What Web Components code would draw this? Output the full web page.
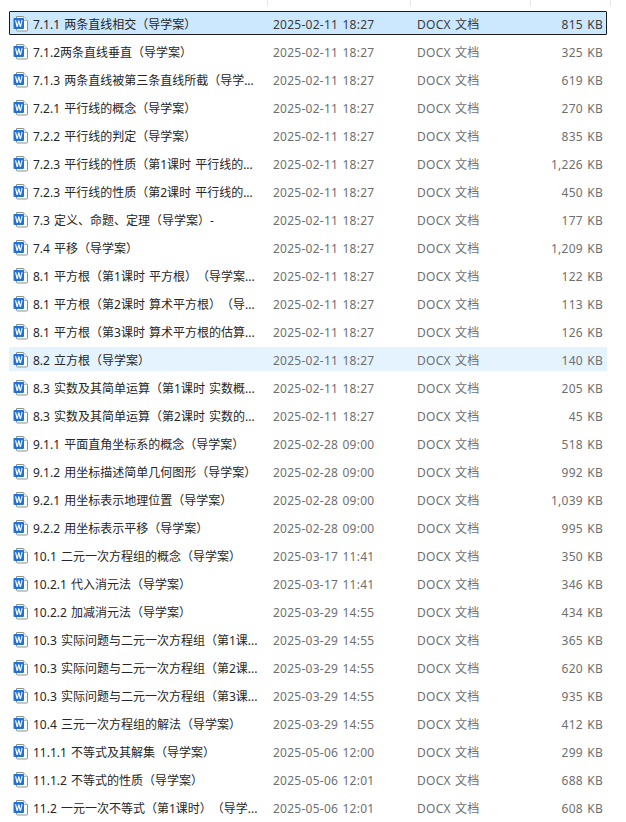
<!DOCTYPE html>
<html lang="zh">
<head>
<meta charset="utf-8">
<title>文件列表</title>
<style>
  html, body { margin: 0; background: #fff; }
  body { font: 12px "Noto Sans", "Noto Sans CJK SC", sans-serif; overflow: hidden; height: 822px; }
</style>
</head>
<body>
<file-list></file-list>
<script>
const FILES = [
  ["7.1.1 两条直线相交（导学案）", "2025-02-11 18:27", "815 KB"],
  ["7.1.2两条直线垂直（导学案）", "2025-02-11 18:27", "325 KB"],
  ["7.1.3 两条直线被第三条直线所截（导学...", "2025-02-11 18:27", "619 KB"],
  ["7.2.1 平行线的概念（导学案）", "2025-02-11 18:27", "270 KB"],
  ["7.2.2 平行线的判定（导学案）", "2025-02-11 18:27", "835 KB"],
  ["7.2.3 平行线的性质（第1课时 平行线的...", "2025-02-11 18:27", "1,226 KB"],
  ["7.2.3 平行线的性质（第2课时 平行线的...", "2025-02-11 18:27", "450 KB"],
  ["7.3 定义、命题、定理（导学案）-", "2025-02-11 18:27", "177 KB"],
  ["7.4 平移（导学案）", "2025-02-11 18:27", "1,209 KB"],
  ["8.1 平方根（第1课时 平方根）（导学案...", "2025-02-11 18:27", "122 KB"],
  ["8.1 平方根（第2课时 算术平方根）（导...", "2025-02-11 18:27", "113 KB"],
  ["8.1 平方根（第3课时 算术平方根的估算...", "2025-02-11 18:27", "126 KB"],
  ["8.2 立方根（导学案）", "2025-02-11 18:27", "140 KB"],
  ["8.3 实数及其简单运算（第1课时 实数概...", "2025-02-11 18:27", "205 KB"],
  ["8.3 实数及其简单运算（第2课时 实数的...", "2025-02-11 18:27", "45 KB"],
  ["9.1.1 平面直角坐标系的概念（导学案）", "2025-02-28 09:00", "518 KB"],
  ["9.1.2 用坐标描述简单几何图形（导学案）", "2025-02-28 09:00", "992 KB"],
  ["9.2.1 用坐标表示地理位置（导学案）", "2025-02-28 09:00", "1,039 KB"],
  ["9.2.2 用坐标表示平移（导学案）", "2025-02-28 09:00", "995 KB"],
  ["10.1 二元一次方程组的概念（导学案）", "2025-03-17 11:41", "350 KB"],
  ["10.2.1 代入消元法（导学案）", "2025-03-17 11:41", "346 KB"],
  ["10.2.2 加减消元法（导学案）", "2025-03-29 14:55", "434 KB"],
  ["10.3 实际问题与二元一次方程组（第1课...", "2025-03-29 14:55", "365 KB"],
  ["10.3 实际问题与二元一次方程组（第2课...", "2025-03-29 14:55", "620 KB"],
  ["10.3 实际问题与二元一次方程组（第3课...", "2025-03-29 14:55", "935 KB"],
  ["10.4 三元一次方程组的解法（导学案）", "2025-03-29 14:55", "412 KB"],
  ["11.1.1 不等式及其解集（导学案）", "2025-05-06 12:00", "299 KB"],
  ["11.1.2 不等式的性质（导学案）", "2025-05-06 12:01", "688 KB"],
  ["11.2 一元一次不等式（第1课时）（导学...", "2025-05-06 12:01", "608 KB"],
];

customElements.define("word-icon", class extends HTMLElement {
  constructor() {
    super();
    this.attachShadow({ mode: "open" }).innerHTML = `
      <style>
        :host { display: block; width: 16px; height: 16px; }
        svg { display: block; }
      </style>
      <svg width="16" height="16" viewBox="0 0 16 16">
        <path d="M3.5 .5H10.5L14.5 4.5V14A1 1 0 0 1 13.5 15H4.5A1 1 0 0 1 3.5 14Z" fill="#fff" stroke="#8f8f8f"/>
        <path d="M10.5 .5V4.5H14.5" fill="#eee" stroke="#a8a8a8" stroke-width=".8"/>
        <rect x=".5" y="2" width="10.5" height="11" rx="1" fill="#2272d6"/>
        <path d="M2 4.2L3.6 11H4.8L5.8 6.9L6.8 11H8L9.6 4.2H8.4L7.4 8.8L6.3 4.2H5.3L4.2 8.8L3.2 4.2Z" fill="#fff"/>
      </svg>`;
  }
});

customElements.define("file-row", class extends HTMLElement {
  static get observedAttributes() { return ["name", "date", "size"]; }
  constructor() {
    super();
    this.shadow = this.attachShadow({ mode: "open" });
    this.shadow.innerHTML = `
      <style>
        :host {
          display: grid;
          grid-template-columns: 16px 244px 144px 1fr auto;
          align-items: center;
          box-sizing: border-box;
          height: 24px;
          padding: 1px 4px 0;
          color: #6f6f6f;
          letter-spacing: .25px;
          line-height: 16px;
          white-space: nowrap;
        }
        :host([state="selected"]) {
          background: #cce8ff;
          outline: 1px solid #1a1a1a;
          outline-offset: -1px;
          border-radius: 1px;
          color: #3b3b3b;
        }
        :host([state="hover"]) { background: #e5f3ff; }
        span { padding-top: 2px; word-spacing: 1px; }
        /* keep the full gap between adjacent brackets */
        #name { color: #262626; letter-spacing: 0; padding-left: 4px; overflow: hidden; text-spacing-trim: space-all; }
      </style>
      <word-icon></word-icon>
      <span id="name"></span>
      <span id="date"></span>
      <span>DOCX 文档</span>
      <span id="size"></span>`;
  }
  attributeChangedCallback(attr, oldValue, newValue) {
    this.shadow.getElementById(attr).textContent = newValue;
  }
});

customElements.define("file-list", class extends HTMLElement {
  constructor() {
    super();
    this.shadow = this.attachShadow({ mode: "open" });
    this.shadow.innerHTML = `
      <style>
        :host { display: block; height: 822px; overflow: hidden; }
        #head { display: grid; grid-template-columns: 267px 1px 142px 1px 119px 1px 79px 1px; height: 6px; margin-bottom: 5px; }
        #head i { background: #e5e5e5; }
        #rows { display: grid; gap: 4px; width: 598px; margin-left: 9px; }
      </style>
      <div id="head"><span></span><i></i><span></span><i></i><span></span><i></i><span></span><i></i></div>
      <div id="rows"></div>`;
    const rows = this.shadow.getElementById("rows");
    FILES.forEach(([name, date, size], i) => {
      const row = document.createElement("file-row");
      row.setAttribute("name", name);
      row.setAttribute("date", date);
      row.setAttribute("size", size);
      if (i == 0) row.setAttribute("state", "selected");
      if (i == 12) row.setAttribute("state", "hover");
      rows.appendChild(row);
    });
  }
});
</script>
</body>
</html>
